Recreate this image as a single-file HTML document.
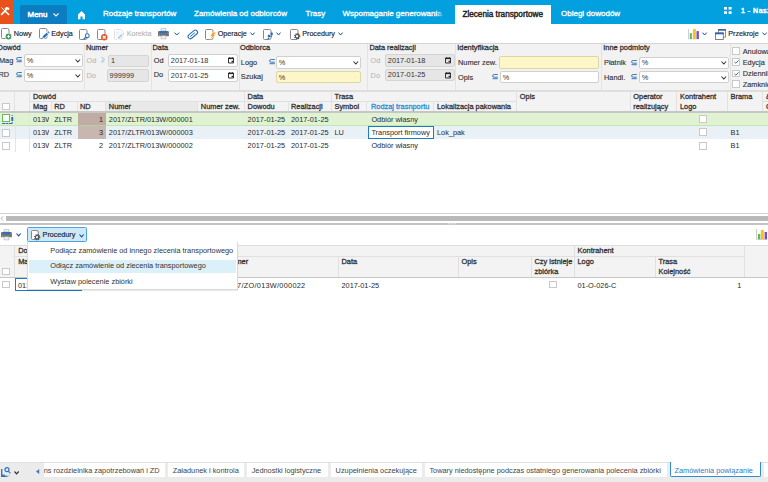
<!DOCTYPE html>
<html><head><meta charset="utf-8">
<style>
*{box-sizing:border-box}
html,body{margin:0;padding:0}
body{width:768px;height:482px;position:relative;overflow:hidden;background:#fff;font-family:"Liberation Sans",sans-serif;font-size:7.35px;color:#2a2a2a;line-height:1}
.a{position:absolute;white-space:nowrap}
svg{position:absolute;overflow:visible}
.tt{position:absolute;top:10.4px;color:#fff;font-size:8px;font-weight:normal;-webkit-text-stroke:0.3px currentColor;white-space:nowrap}
.tb{position:absolute;top:30.4px;font-size:7.2px;color:#222;white-space:nowrap;-webkit-text-stroke:0.15px currentColor}
.inp{position:absolute;background:#fff;border:1px solid #d0d0d0;border-radius:2px;height:12px}
.inp span{position:absolute;left:4px;top:2.5px;color:#333}
.y{background:#fdf6c6;border-color:#ddd7a8}
.dis{background:#e6e6e6;border-color:#d4d4d4}
.sep{position:absolute;top:44px;width:1px;height:46px;background:#e3e3e3}
.lb{position:absolute;color:#303030;white-space:nowrap;-webkit-text-stroke:0.12px currentColor}
.gl{color:#b9b9b9}
.it{color:#333}
.ss{position:absolute;color:#2b7bbd;font-size:8px;font-weight:bold}
.hd{position:absolute;font-weight:normal;-webkit-text-stroke:0.3px currentColor;color:#333;font-size:7.4px;white-space:nowrap}
.vl{position:absolute;width:1px;background:#e0e0e0}
.cb{position:absolute;width:8px;height:8px;border:1px solid #c9c9c9;background:#fff}
.cell{position:absolute;white-space:nowrap;color:#2a2a2a}
</style></head>
<body>
<!-- TOP BAR -->
<div class="a" style="left:0;top:0;width:768px;height:24px;background:#03a0df"></div>
<div class="a" style="left:0;top:0;width:12.5px;height:24px;background:#e9511c"></div>
<svg style="left:0;top:0" width="13" height="24" viewBox="0 0 13 24"><path d="M1.3 7.4 L4.6 10.6" stroke="#fff" stroke-width="1" fill="none"/><path d="M5.4 11.4 L8.7 14.5" stroke="#fff" stroke-width="1.5" stroke-linecap="round" fill="none"/><path d="M1.6 14.4 L6.2 9.7" stroke="#fff" stroke-width="1.7" stroke-linecap="round" fill="none"/><path d="M4.4 8.6 L6.2 6.9 L8.3 7.3 L9.6 9.1 L8.6 10 L6.8 9.4 L5.7 10.3 Z" fill="#fff"/></svg>
<div class="a" style="left:19.5px;top:4.7px;width:47.5px;height:19.3px;background:#0b7dc0;border-radius:2px 2px 0 0"></div>
<div class="tt" style="left:27.6px;top:10.6px;font-size:7.9px;-webkit-text-stroke:0.5px #fff">Menu</div>
<svg style="left:53px;top:13px" width="6" height="4" viewBox="0 0 6 4"><path d="M0.5 0.5 L3 3 L5.5 0.5" stroke="#fff" stroke-width="1.1" fill="none"/></svg>
<svg style="left:78px;top:10.7px" width="7" height="8.3" viewBox="0 0 7 8.3"><path d="M3.5 0 L7 3.6 L7 8.3 L4.6 8.3 L4.6 5.6 L2.4 5.6 L2.4 8.3 L0 8.3 L0 3.6 Z" fill="#fff"/></svg>
<div class="tt" style="left:103px;">Rodzaje transportów</div>
<div class="tt" style="left:194px;">Zamówienia od odbiorców</div>
<div class="tt" style="left:305.6px;">Trasy</div>
<div class="tt" style="left:342.5px;">Wspomaganie generowania</div>
<div class="a" style="left:435.5px;top:8px;width:6px;height:12px;background:linear-gradient(to right,rgba(3,160,223,0),rgba(3,160,223,0.75))"></div>
<div class="a" style="left:455px;top:5px;width:96px;height:19px;background:#fff"></div>
<div class="tt" style="left:462.4px;top:10.8px;color:#222;font-size:8.2px;-webkit-text-stroke:0.4px #222">Zlecenia transportowe</div>
<div class="tt" style="left:561px;">Obiegi dowodów</div>
<svg style="left:724px;top:7px" width="8" height="7" viewBox="0 0 8 7"><rect x="0" y="0" width="3" height="2.6" fill="#fff"/><rect x="4.6" y="0" width="3" height="2.6" fill="#fff"/><rect x="0" y="4.3" width="3" height="2.6" fill="#fff"/><rect x="4.6" y="4.3" width="3" height="2.6" fill="#fff"/></svg>
<div class="tt" style="left:741px;top:7.3px;font-size:7px;letter-spacing:0.5px;-webkit-text-stroke:0.5px #fff">1 - Nasza</div>

<!-- TOOLBAR -->
<div class="a" style="left:0;top:42.5px;width:768px;height:1px;background:#d4d4d4"></div>
<!-- doc icons -->
<svg style="left:1px;top:28px" width="9" height="11" viewBox="0 0 9 11"><path d="M1.5 0.5 H6.5 Q8 0.5 8 2 V9 Q8 10.5 6.5 10.5 H1.5 Q0.5 10.5 0.5 9.5 V1.5 Q0.5 0.5 1.5 0.5 Z" fill="#fff" stroke="#7a7a7a" stroke-width="0.9"/></svg>
<svg style="left:5px;top:33.3px" width="7" height="7" viewBox="0 0 7 7"><circle cx="3.5" cy="3.5" r="3.4" fill="#fff"/><circle cx="3.5" cy="3.5" r="2.9" fill="#3d9f5c"/><path d="M3.5 2 V5 M2 3.5 H5" stroke="#fff" stroke-width="0.95"/></svg>
<div class="tb" style="left:13.7px">Nowy</div>
<svg style="left:39px;top:28.3px" width="9" height="11" viewBox="0 0 9 11"><path d="M1.5 0.5 H6.5 Q8 0.5 8 2 V9 Q8 10.5 6.5 10.5 H1.5 Q0.5 10.5 0.5 9.5 V1.5 Q0.5 0.5 1.5 0.5 Z" fill="#fff" stroke="#7a7a7a" stroke-width="0.9"/></svg>
<svg style="left:39px;top:28px" width="12" height="12" viewBox="0 0 12 12"><path d="M3.2 10.4 L10.2 3.8" stroke="#fff" stroke-width="3.4"/><path d="M4.3 9.4 L8.4 5.5" stroke="#1f6fc0" stroke-width="2.2"/><path d="M8.9 5 L10.1 3.9" stroke="#5a9ad8" stroke-width="2.2"/><path d="M2.6 11 L4.1 9.6" stroke="#6aa6dc" stroke-width="1.3"/></svg>
<div class="tb" style="left:51.3px">Edycja</div>
<svg style="left:79.3px;top:28.5px" width="9" height="11" viewBox="0 0 9 11"><path d="M1.5 0.5 H6.5 Q8 0.5 8 2 V9 Q8 10.5 6.5 10.5 H1.5 Q0.5 10.5 0.5 9.5 V1.5 Q0.5 0.5 1.5 0.5 Z" fill="#fff" stroke="#7a7a7a" stroke-width="0.9"/></svg>
<svg style="left:83px;top:33px" width="7" height="7" viewBox="0 0 7 7"><circle cx="4.3" cy="2.7" r="1.9" fill="#fff" stroke="#2a73c0" stroke-width="1.1"/><path d="M3 4 L0.8 6.2" stroke="#2a73c0" stroke-width="1.3"/></svg>
<svg style="left:96.5px;top:28.5px" width="9" height="11" viewBox="0 0 9 11"><path d="M1.5 0.5 H6.5 Q8 0.5 8 2 V9 Q8 10.5 6.5 10.5 H1.5 Q0.5 10.5 0.5 9.5 V1.5 Q0.5 0.5 1.5 0.5 Z" fill="#fff" stroke="#7a7a7a" stroke-width="0.9"/></svg>
<svg style="left:101px;top:33.5px" width="6.5" height="6.5" viewBox="0 0 6 6"><circle cx="3" cy="3" r="3" fill="#e4552a"/><path d="M1.7 1.7 L4.3 4.3 M4.3 1.7 L1.7 4.3" stroke="#fff" stroke-width="1.1"/></svg>
<svg style="left:114px;top:28.5px" width="12" height="12" viewBox="0 0 12 12"><path d="M1.5 0.5 H6.5 Q8 0.5 8 2 V9 Q8 10.5 6.5 10.5 H1.5 Q0.5 10.5 0.5 9.5 V1.5 Q0.5 0.5 1.5 0.5 Z" fill="#fff" stroke="#dcdcdc" stroke-width="0.9"/><path d="M2 3.2 H5.5 M2 5.2 H4.5" stroke="#cfe0ee" stroke-width="0.8"/><path d="M3 10.6 L10 4" stroke="#fff" stroke-width="3.2"/><path d="M4 9.6 L8.3 5.6" stroke="#b3cfea" stroke-width="2"/><path d="M8.8 5.1 L9.9 4.1" stroke="#c8ddf0" stroke-width="2"/></svg>
<div class="tb" style="left:126.7px;color:#b8b8b8">Korekta</div>
<svg style="left:158px;top:28.3px" width="11" height="11.2" viewBox="0 0 11 11.2"><rect x="3.1" y="0.3" width="4.7" height="2.8" fill="#f2f2f2" stroke="#b8b8b8" stroke-width="0.6"/><path d="M1 2.9 H9.9 Q10.9 2.9 10.9 3.9 V8.2 H0 V3.9 Q0 2.9 1 2.9 Z" fill="#747474"/><rect x="2" y="2.9" width="7" height="2.3" fill="#2f6fc0"/><rect x="3.1" y="7.8" width="4.8" height="3.1" fill="#fff" stroke="#a8a8a8" stroke-width="0.6"/><path d="M3.8 9.1 H7.2" stroke="#bcd3ea" stroke-width="0.6"/><circle cx="1.3" cy="7" r="0.45" fill="#fff"/></svg>
<svg style="left:173.8px;top:31.9px" width="6" height="4" viewBox="0 0 6 4"><path d="M0.5 0.6 L2.8 3 L5.1 0.6" stroke="#1d4f8a" stroke-width="1" fill="none"/></svg>
<svg style="left:186.5px;top:28.5px" width="11.5" height="11" viewBox="0 0 11.5 11"><g transform="rotate(-40 5.75 5.5)"><rect x="0.3" y="3.3" width="11" height="4.4" rx="2.2" fill="none" stroke="#2a6fc0" stroke-width="1.1"/><path d="M2.4 5.5 H8.6" stroke="#2a6fc0" stroke-width="0.9"/></g></svg>
<svg style="left:205.4px;top:28.5px" width="9" height="11" viewBox="0 0 9 11"><path d="M1.5 0.5 H6.5 Q8 0.5 8 2 V9 Q8 10.5 6.5 10.5 H1.5 Q0.5 10.5 0.5 9.5 V1.5 Q0.5 0.5 1.5 0.5 Z" fill="#fff" stroke="#7a7a7a" stroke-width="0.9"/></svg>
<svg style="left:208.8px;top:32.2px" width="7.5" height="7.5" viewBox="0 0 7.5 7.5"><path d="M3.9 0.2 L7.3 0.2 L5.1 2.8 L6.9 2.8 L0.8 7.4 L2.7 4.1 L1.1 4.1 Z" fill="#f0a01e" stroke="#fff" stroke-width="0.5"/></svg>
<div class="tb" style="left:217.7px">Operacje</div>
<svg style="left:249.7px;top:32.0px" width="6" height="4" viewBox="0 0 6 4"><path d="M0.5 0.6 L2.5 3 L4.5 0.6" stroke="#1d4f8a" stroke-width="1" fill="none"/></svg>
<svg style="left:263.2px;top:28.7px" width="9" height="11" viewBox="0 0 9 11"><path d="M1.5 0.5 H6.5 Q8 0.5 8 2 V9 Q8 10.5 6.5 10.5 H1.5 Q0.5 10.5 0.5 9.5 V1.5 Q0.5 0.5 1.5 0.5 Z" fill="#fff" stroke="#7a7a7a" stroke-width="0.9"/></svg>
<svg style="left:266.8px;top:31.8px" width="6.5" height="7.5" viewBox="0 0 6.5 7.5"><ellipse cx="4.7" cy="1.9" rx="1.2" ry="1.6" fill="#2a6fc0"/><ellipse cx="4.2" cy="4.4" rx="0.9" ry="0.7" fill="#2a6fc0"/><ellipse cx="1.9" cy="3.9" rx="1.2" ry="1.5" fill="#2a6fc0"/><ellipse cx="1.5" cy="6.4" rx="0.9" ry="0.7" fill="#2a6fc0"/></svg>
<svg style="left:276px;top:32.0px" width="6" height="4" viewBox="0 0 6 4"><path d="M0.5 0.6 L2.5 3 L4.5 0.6" stroke="#1d4f8a" stroke-width="1" fill="none"/></svg>
<svg style="left:289.5px;top:28.6px" width="9" height="11" viewBox="0 0 9 11"><path d="M1.5 0.5 H6.5 Q8 0.5 8 2 V9 Q8 10.5 6.5 10.5 H1.5 Q0.5 10.5 0.5 9.5 V1.5 Q0.5 0.5 1.5 0.5 Z" fill="#fff" stroke="#7a7a7a" stroke-width="0.9"/></svg>
<svg style="left:293.6px;top:33.4px" width="6.4" height="6.4" viewBox="0 0 6.4 6.4"><circle cx="3.2" cy="3.2" r="2.5" fill="none" stroke="#4a4a4a" stroke-width="1.3" stroke-dasharray="1.1 0.86"/><circle cx="3.2" cy="3.2" r="1.75" fill="none" stroke="#4a4a4a" stroke-width="1.1"/><circle cx="3.2" cy="3.2" r="0.9" fill="#fff"/></svg>
<div class="tb" style="left:302.2px">Procedury</div>
<svg style="left:338.4px;top:32.0px" width="6" height="4" viewBox="0 0 6 4"><path d="M0.5 0.6 L2.5 3 L4.5 0.6" stroke="#1d4f8a" stroke-width="1" fill="none"/></svg>
<svg style="left:688.2px;top:28.9px" width="11.5" height="10.5" viewBox="0 0 11.5 10.5"><path d="M0.5 0 V10" stroke="#c8c8c8" stroke-width="0.9"/><path d="M0.5 10 H11" stroke="#c8c8c8" stroke-width="0.6"/><rect x="1.8" y="4.2" width="2.1" height="5.8" fill="#5cb85c"/><rect x="4.9" y="0.1" width="2.9" height="9.9" fill="#f7c01a"/><rect x="8.5" y="2.1" width="2.4" height="7.9" fill="#7b4fc4"/></svg>
<svg style="left:702.2px;top:32.1px" width="6" height="4" viewBox="0 0 6 4"><path d="M0.5 0.6 L2.6 3 L4.7 0.6" stroke="#1d4f8a" stroke-width="1" fill="none"/></svg>
<svg style="left:715px;top:28.5px" width="11" height="11" viewBox="0 0 11 11"><rect x="3.5" y="0.5" width="7" height="7.6" fill="#fff" stroke="#777" stroke-width="0.8"/><rect x="3.2" y="0.1" width="7.6" height="1.6" fill="#2a63ad"/><rect x="0.5" y="3.9" width="7.8" height="6.6" fill="#fff" stroke="#777" stroke-width="0.9"/><rect x="0.1" y="3.6" width="8.5" height="1.7" fill="#2a63ad"/></svg>
<div class="tb" style="left:728.3px">Przekroje</div>
<svg style="left:762px;top:32.1px" width="6" height="4" viewBox="0 0 6 4"><path d="M0.5 0.6 L2.6 3 L4.7 0.6" stroke="#1d4f8a" stroke-width="1" fill="none"/></svg>

<!-- FILTER PANEL -->
<div class="a" style="left:0;top:43.5px;width:768px;height:46.5px;background:#f2f2f2"></div>
<div class="sep" style="left:84px"></div>
<div class="sep" style="left:151px"></div>
<div class="sep" style="left:239px"></div>
<div class="sep" style="left:367px"></div>
<div class="sep" style="left:455px"></div>
<div class="sep" style="left:601px"></div>
<div class="sep" style="left:730px"></div>
<div class="hd" style="left:-2.4px;top:44.2px">Dowód</div>
<div class="lb a" style="left:-1px;top:56.8px">Mag</div>
<svg style="left:16.3px;top:57px" width="6" height="5.5" viewBox="0 0 6 5.5"><path d="M5.8 0.5 H2.3 Q0.5 0.5 0.5 1.85 Q0.5 3.2 2.3 3.2 H5.8 M0.5 4.7 H5.8" stroke="#3273b0" stroke-width="0.95" fill="none"/></svg>
<div class="inp " style="left:24px;top:54px;width:59px;height:13px"></div><div class="a it" style="left:26.8px;top:56.7px">%</div><svg style="left:75.2px;top:58.7px" width="6" height="4" viewBox="0 0 6 4"><path d="M0.5 0.5 L2.8 3 L5.1 0.5" stroke="#333" stroke-width="1.1" fill="none"/></svg>
<div class="lb a" style="left:-1.5px;top:71.3px">RD</div>
<svg style="left:16.3px;top:72px" width="6" height="5.5" viewBox="0 0 6 5.5"><path d="M5.8 0.5 H2.3 Q0.5 0.5 0.5 1.85 Q0.5 3.2 2.3 3.2 H5.8 M0.5 4.7 H5.8" stroke="#3273b0" stroke-width="0.95" fill="none"/></svg>
<div class="inp " style="left:24px;top:69px;width:59px;height:12.5px"></div><div class="a it" style="left:26.8px;top:71.7px">%</div><svg style="left:75.2px;top:73.7px" width="6" height="4" viewBox="0 0 6 4"><path d="M0.5 0.5 L2.8 3 L5.1 0.5" stroke="#333" stroke-width="1.1" fill="none"/></svg>
<div class="hd" style="left:85.9px;top:44.2px">Numer</div>
<div class="lb gl a" style="left:86.5px;top:57px">Od</div>
<svg style="left:101.4px;top:57.3px" width="4" height="6" viewBox="0 0 4 6"><path d="M0.4 0.4 Q2.5 1.2 3.5 2.2 Q2.5 3.2 0.4 4 M0.4 5.5 Q2.5 4.8 3.5 4.2" stroke="#88b9dc" stroke-width="0.8" fill="none"/></svg>
<div class="inp dis" style="left:108px;top:54.5px;width:41px;height:12.5px"></div><div class="a it" style="left:111px;top:57.2px">1</div>
<div class="lb gl a" style="left:86.5px;top:72px">Do</div>
<div class="inp dis" style="left:107.3px;top:69px;width:41.7px;height:12.5px"></div><div class="a it" style="left:109.6px;top:71.7px">999999</div>
<div class="hd" style="left:152.5px;top:44.2px">Data</div>
<div class="lb a" style="left:153.7px;top:56.7px">Od</div>
<div class="inp " style="left:168px;top:54.3px;width:70px;height:12.299999999999997px"></div><div class="a it" style="left:170.8px;top:57.0px">2017-01-18</div><svg style="left:228.1px;top:57.199999999999996px" width="6" height="6.5" viewBox="0 0 6 6.5"><path d="M0.5 1.3 H5.5 V6 H0.5 Z" fill="none" stroke="#222" stroke-width="0.9"/><rect x="0.1" y="0.8" width="5.8" height="1.3" fill="#222"/><rect x="1.3" y="0.1" width="0.9" height="0.9" fill="#222"/><rect x="3.8" y="0.1" width="0.9" height="0.9" fill="#222"/><rect x="3.6" y="3.8" width="1.5" height="1.4" fill="#222"/></svg>
<div class="lb a" style="left:153.7px;top:71.3px">Do</div>
<div class="inp " style="left:168px;top:69px;width:70px;height:12.5px"></div><div class="a it" style="left:170.8px;top:71.7px">2017-01-25</div><svg style="left:228.1px;top:71.9px" width="6" height="6.5" viewBox="0 0 6 6.5"><path d="M0.5 1.3 H5.5 V6 H0.5 Z" fill="none" stroke="#222" stroke-width="0.9"/><rect x="0.1" y="0.8" width="5.8" height="1.3" fill="#222"/><rect x="1.3" y="0.1" width="0.9" height="0.9" fill="#222"/><rect x="3.8" y="0.1" width="0.9" height="0.9" fill="#222"/><rect x="3.6" y="3.8" width="1.5" height="1.4" fill="#222"/></svg>
<div class="hd" style="left:240px;top:44.2px">Odbiorca</div>
<div class="lb a" style="left:240.8px;top:58.6px">Logo</div>
<svg style="left:268.7px;top:59px" width="6" height="5.5" viewBox="0 0 6 5.5"><path d="M5.8 0.5 H2.3 Q0.5 0.5 0.5 1.85 Q0.5 3.2 2.3 3.2 H5.8 M0.5 4.7 H5.8" stroke="#3273b0" stroke-width="0.95" fill="none"/></svg>
<div class="inp " style="left:276px;top:56.3px;width:85px;height:12.5px"></div><div class="a it" style="left:278.8px;top:59.0px">%</div><svg style="left:353.2px;top:61.0px" width="6" height="4" viewBox="0 0 6 4"><path d="M0.5 0.5 L2.8 3 L5.1 0.5" stroke="#333" stroke-width="1.1" fill="none"/></svg>
<div class="lb a" style="left:240.8px;top:73.2px">Szukaj</div>
<div class="inp y" style="left:276px;top:70.8px;width:85px;height:12.400000000000006px"></div><div class="a it" style="left:278.8px;top:73.5px">%</div>
<div class="hd" style="left:369.4px;top:44.2px">Data realizacji</div>
<div class="lb gl a" style="left:370.6px;top:57px">Od</div>
<div class="inp dis" style="left:385px;top:54.3px;width:69.5px;height:12.5px"></div><div class="a it" style="left:387.8px;top:57.0px">2017-01-18</div><svg style="left:444.6px;top:57.199999999999996px" width="6" height="6.5" viewBox="0 0 6 6.5"><path d="M0.5 1.3 H5.5 V6 H0.5 Z" fill="none" stroke="#222" stroke-width="0.9"/><rect x="0.1" y="0.8" width="5.8" height="1.3" fill="#222"/><rect x="1.3" y="0.1" width="0.9" height="0.9" fill="#222"/><rect x="3.8" y="0.1" width="0.9" height="0.9" fill="#222"/><rect x="3.6" y="3.8" width="1.5" height="1.4" fill="#222"/></svg>
<div class="lb gl a" style="left:370.6px;top:71.5px">Do</div>
<div class="inp dis" style="left:385px;top:68.7px;width:69.5px;height:12.5px"></div><div class="a it" style="left:387.8px;top:71.4px">2017-01-25</div><svg style="left:444.6px;top:71.60000000000001px" width="6" height="6.5" viewBox="0 0 6 6.5"><path d="M0.5 1.3 H5.5 V6 H0.5 Z" fill="none" stroke="#222" stroke-width="0.9"/><rect x="0.1" y="0.8" width="5.8" height="1.3" fill="#222"/><rect x="1.3" y="0.1" width="0.9" height="0.9" fill="#222"/><rect x="3.8" y="0.1" width="0.9" height="0.9" fill="#222"/><rect x="3.6" y="3.8" width="1.5" height="1.4" fill="#222"/></svg>
<div class="hd" style="left:457.3px;top:44.2px">Identyfikacja</div>
<div class="lb a" style="left:458px;top:59px">Numer zew.</div>
<div class="inp y" style="left:499px;top:56.4px;width:100px;height:12.399999999999999px"></div>
<div class="lb a" style="left:458px;top:73.5px">Opis</div>
<svg style="left:491.7px;top:74px" width="6" height="5.5" viewBox="0 0 6 5.5"><path d="M5.8 0.5 H2.3 Q0.5 0.5 0.5 1.85 Q0.5 3.2 2.3 3.2 H5.8 M0.5 4.7 H5.8" stroke="#3273b0" stroke-width="0.95" fill="none"/></svg>
<div class="inp " style="left:500px;top:71px;width:99px;height:11.799999999999997px"></div><div class="a it" style="left:502.8px;top:73.7px">%</div>
<div class="hd" style="left:603.3px;top:44.2px">Inne podmioty</div>
<div class="lb a" style="left:604px;top:59px">Płatnik</div>
<svg style="left:630.6px;top:59.5px" width="6" height="5.5" viewBox="0 0 6 5.5"><path d="M5.8 0.5 H2.3 Q0.5 0.5 0.5 1.85 Q0.5 3.2 2.3 3.2 H5.8 M0.5 4.7 H5.8" stroke="#3273b0" stroke-width="0.95" fill="none"/></svg>
<div class="inp " style="left:639px;top:56.7px;width:90px;height:12.099999999999994px"></div><div class="a it" style="left:641.8px;top:59.400000000000006px">%</div><svg style="left:721.2px;top:61.400000000000006px" width="6" height="4" viewBox="0 0 6 4"><path d="M0.5 0.5 L2.8 3 L5.1 0.5" stroke="#333" stroke-width="1.1" fill="none"/></svg>
<div class="lb a" style="left:604px;top:73.5px">Handl.</div>
<svg style="left:630.6px;top:74px" width="6" height="5.5" viewBox="0 0 6 5.5"><path d="M5.8 0.5 H2.3 Q0.5 0.5 0.5 1.85 Q0.5 3.2 2.3 3.2 H5.8 M0.5 4.7 H5.8" stroke="#3273b0" stroke-width="0.95" fill="none"/></svg>
<div class="inp " style="left:639px;top:71.3px;width:90px;height:12.0px"></div><div class="a it" style="left:641.8px;top:74.0px">%</div><svg style="left:721.2px;top:76.0px" width="6" height="4" viewBox="0 0 6 4"><path d="M0.5 0.5 L2.8 3 L5.1 0.5" stroke="#333" stroke-width="1.1" fill="none"/></svg>
<div class="cb" style="left:732px;top:47.2px;width:7.6px;height:7.6px"></div>
<div class="lb a" style="left:742.7px;top:47.6px">Anulowane</div>
<div class="cb" style="left:732px;top:58.4px;width:7.6px;height:7.6px"></div><svg style="left:733.5px;top:60.4px" width="5" height="4" viewBox="0 0 5 4"><path d="M0.4 1.9 L1.8 3.2 L4.6 0.4" stroke="#2b6cb0" stroke-width="1" fill="none"/></svg>
<div class="lb a" style="left:742.7px;top:58.6px">Edycja</div>
<div class="cb" style="left:732px;top:69.6px;width:7.6px;height:7.6px"></div><svg style="left:733.5px;top:71.6px" width="5" height="4" viewBox="0 0 5 4"><path d="M0.4 1.9 L1.8 3.2 L4.6 0.4" stroke="#2b6cb0" stroke-width="1" fill="none"/></svg>
<div class="lb a" style="left:742.7px;top:69.6px">Dziennik</div>
<div class="cb" style="left:732px;top:80.3px;width:7.6px;height:7.6px"></div>
<div class="lb a" style="left:742.7px;top:80.6px">Zamknięte</div>

<!-- GRID -->
<div class="a" style="left:0px;top:90px;width:768px;height:1.6px;background:#dedede"></div>
<div class="a" style="left:0;top:91.6px;width:768px;height:19.4px;background:#f3f3f3"></div>
<div class="a" style="left:105px;top:101.5px;width:92.5px;height:9.5px;background:#e9e9e9"></div>
<div class="a" style="left:0px;top:111px;width:768px;height:1.8px;background:#c6c6c6"></div>
<div class="a" style="left:29px;top:101px;width:487px;height:1px;background:#e0e0e0"></div>
<div class="a" style="left:762px;top:101px;width:6px;height:1px;background:#e0e0e0"></div>
<div class="a" style="left:14px;top:91.6px;width:1px;height:19.400000000000006px;background:#e2e2e2"></div>
<div class="a" style="left:29px;top:91.6px;width:1px;height:19.400000000000006px;background:#e2e2e2"></div>
<div class="a" style="left:51px;top:101px;width:1px;height:10px;background:#e2e2e2"></div>
<div class="a" style="left:77px;top:101px;width:1px;height:10px;background:#e2e2e2"></div>
<div class="a" style="left:105px;top:101px;width:1px;height:10px;background:#e2e2e2"></div>
<div class="a" style="left:197px;top:101px;width:1px;height:10px;background:#e2e2e2"></div>
<div class="a" style="left:244px;top:91.6px;width:1px;height:19.400000000000006px;background:#e2e2e2"></div>
<div class="a" style="left:288px;top:101px;width:1px;height:10px;background:#e2e2e2"></div>
<div class="a" style="left:331px;top:91.6px;width:1px;height:19.400000000000006px;background:#e2e2e2"></div>
<div class="a" style="left:366px;top:101px;width:1px;height:10px;background:#e2e2e2"></div>
<div class="a" style="left:433px;top:101px;width:1px;height:10px;background:#e2e2e2"></div>
<div class="a" style="left:516px;top:91.6px;width:1px;height:19.400000000000006px;background:#e2e2e2"></div>
<div class="a" style="left:630px;top:91.6px;width:1px;height:19.400000000000006px;background:#e2e2e2"></div>
<div class="a" style="left:676px;top:91.6px;width:1px;height:19.400000000000006px;background:#e2e2e2"></div>
<div class="a" style="left:727px;top:91.6px;width:1px;height:19.400000000000006px;background:#e2e2e2"></div>
<div class="a" style="left:762px;top:91.6px;width:1px;height:19.400000000000006px;background:#e2e2e2"></div>
<div class="hd" style="left:33px;top:93.3px">Dowód</div>
<div class="hd" style="left:247.6px;top:93.3px">Data</div>
<div class="hd" style="left:334.5px;top:93.3px">Trasa</div>
<div class="hd" style="left:519.8px;top:93.3px">Opis</div>
<div class="hd" style="left:633.3px;top:93.3px">Operator</div>
<div class="hd" style="left:680px;top:93.3px">Kontrahent</div>
<div class="hd" style="left:730.6px;top:93.3px">Brama</div>
<div class="hd" style="left:766px;top:93.3px">&amp;</div>
<div class="hd" style="left:633.3px;top:103px">realizujący</div>
<div class="hd" style="left:680px;top:103px">Logo</div>
<div class="hd" style="left:766px;top:103px">C</div>
<div class="hd" style="left:33px;top:103px">Mag</div>
<div class="hd" style="left:54.2px;top:103px">RD</div>
<div class="hd" style="left:80px;top:103px">ND</div>
<div class="hd" style="left:108.8px;top:103px">Numer</div>
<div class="hd" style="left:200.8px;top:103px">Numer zew.</div>
<div class="hd" style="left:247.6px;top:103px">Dowodu</div>
<div class="hd" style="left:291px;top:103px">Realizacji</div>
<div class="hd" style="left:334.5px;top:103px">Symbol</div>
<div class="hd" style="left:437px;top:103px">Lokalizacja pakowania</div>
<div class="hd" style="left:371px;top:103px;color:#2a8fd4">Rodzaj trasnportu</div>
<div class="cb" style="left:2.2px;top:102.7px;width:7.7px;height:7.6px"></div>
<div class="a" style="left:0px;top:112.8px;width:768px;height:12px;background:#dff3d3"></div>
<div class="a" style="left:0px;top:124.8px;width:768px;height:0.9px;background:#c4e5ae"></div>
<div class="a" style="left:0px;top:125.7px;width:768px;height:13px;background:#e9f1f6"></div>
<div class="a" style="left:77.7px;top:112.9px;width:28.2px;height:11.9px;background:#c0aca4"></div>
<div class="a" style="left:77.7px;top:125.8px;width:28.2px;height:12.9px;background:#c8b6b0"></div>
<div class="a" style="left:77.7px;top:124.8px;width:28.200000000000003px;height:0.9px;background:#b5cfa0"></div>
<div class="a" style="left:14.6px;top:112.8px;width:1px;height:39.2px;background:#d9e7f3"></div>
<div class="a" style="left:29px;top:112.8px;width:1px;height:39.2px;background:#d9e7f3"></div>
<div class="a" style="left:368px;top:126px;width:66.2px;height:13px;border:1.7px solid #1a7cc6;background:#fff"></div>
<div class="cell" style="left:33px;top:115.6px;width:16.4px;overflow:hidden">013W</div>
<div class="cell" style="left:54.2px;top:115.6px">ZLTR</div>
<div class="cell" style="right:665px;top:115.6px">1</div>
<div class="cell" style="left:108.8px;top:115.6px">2017/ZLTR/013W/000001</div>
<div class="cell" style="left:247.6px;top:115.6px">2017-01-25</div>
<div class="cell" style="left:291px;top:115.6px">2017-01-25</div>
<div class="cell" style="left:371.4px;top:115.6px">Odbiór własny</div>
<div class="cb" style="left:698.6px;top:115.1px;width:8.1px;height:8.1px"></div>
<div class="cb" style="left:2px;top:128.6px;width:8px;height:8px"></div>
<div class="cell" style="left:33px;top:129.0px;width:16.4px;overflow:hidden">013W</div>
<div class="cell" style="left:54.2px;top:129.0px">ZLTR</div>
<div class="cell" style="right:665px;top:129.0px">3</div>
<div class="cell" style="left:108.8px;top:129.0px">2017/ZLTR/013W/000003</div>
<div class="cell" style="left:247.6px;top:129.0px">2017-01-25</div>
<div class="cell" style="left:291px;top:129.0px">2017-01-25</div>
<div class="cell" style="left:334.5px;top:129.0px">LU</div>
<div class="cell" style="left:371.4px;top:129.0px">Transport firmowy</div>
<div class="cell" style="left:437px;top:129.0px">Lok_pak</div>
<div class="cell" style="left:730.6px;top:129.0px">B1</div>
<div class="cb" style="left:698.6px;top:128.29999999999998px;width:8.1px;height:8.1px"></div>
<div class="cb" style="left:2px;top:142.2px;width:8px;height:8px"></div>
<div class="cell" style="left:33px;top:142.3px;width:16.4px;overflow:hidden">013W</div>
<div class="cell" style="left:54.2px;top:142.3px">ZLTR</div>
<div class="cell" style="right:665px;top:142.3px">2</div>
<div class="cell" style="left:108.8px;top:142.3px">2017/ZLTR/013W/000002</div>
<div class="cell" style="left:247.6px;top:142.3px">2017-01-25</div>
<div class="cell" style="left:291px;top:142.3px">2017-01-25</div>
<div class="cell" style="left:371.4px;top:142.3px">Odbiór własny</div>
<div class="cell" style="left:730.6px;top:142.3px">B1</div>
<div class="cb" style="left:698.6px;top:141.89999999999998px;width:8.1px;height:8.1px"></div>
<div class="a" style="left:1.9px;top:114px;width:8.4px;height:7.8px;border:1.3px solid #66bd55;background:#fff"></div>
<div class="a" style="left:2px;top:122.8px;width:10px;height:0;border-top:0.9px dashed #3070c0"></div>
<svg style="left:11.3px;top:114.8px" width="2.5" height="9" viewBox="0 0 2.5 9"><rect x="0.6" y="0" width="1.2" height="1" fill="#3a78c4"/><rect x="0.3" y="2" width="1.9" height="4" fill="#2a6cc0"/><rect x="0.6" y="7" width="1.2" height="1.6" fill="#3a78c4"/></svg>

<!-- SCROLLBAR -->
<div class="a" style="left:0px;top:213px;width:768px;height:1px;background:#d2d2d2"></div>
<div class="a" style="left:6px;top:216px;width:762px;height:4.6px;background:#b9b9b9"></div>
<svg style="left:0;top:216px" width="4" height="5" viewBox="0 0 4 5"><path d="M3.4 0.3 L0.8 2.5 L3.4 4.7" stroke="#9a9a9a" stroke-width="0.7" fill="none"/></svg>
<div class="a" style="left:0px;top:222.8px;width:768px;height:2px;background:#c4c4c4"></div>
<svg style="left:448px;top:223px" width="8" height="1.5" viewBox="0 0 8 1.5"><rect x="0.3" y="0.2" width="1.3" height="1.1" fill="#eee"/><rect x="3.3" y="0.2" width="1.3" height="1.1" fill="#eee"/><rect x="6.3" y="0.2" width="1.3" height="1.1" fill="#eee"/></svg>
<!-- BOTTOM TOOLBAR -->
<svg style="left:1px;top:229px" width="11" height="11.2" viewBox="0 0 11 11.2"><rect x="3.1" y="0.3" width="4.7" height="2.8" fill="#f2f2f2" stroke="#b8b8b8" stroke-width="0.6"/><path d="M1 2.9 H9.9 Q10.9 2.9 10.9 3.9 V8.2 H0 V3.9 Q0 2.9 1 2.9 Z" fill="#747474"/><rect x="2" y="2.9" width="7" height="2.3" fill="#2f6fc0"/><rect x="3.1" y="7.8" width="4.8" height="3.1" fill="#fff" stroke="#a8a8a8" stroke-width="0.6"/><path d="M3.8 9.1 H7.2" stroke="#bcd3ea" stroke-width="0.6"/><circle cx="1.3" cy="7" r="0.45" fill="#fff"/></svg>
<svg style="left:16.3px;top:233.4px" width="6" height="4" viewBox="0 0 6 4"><path d="M0.5 0.5 L2.6 2.9 L4.7 0.5" stroke="#1d4f8a" stroke-width="1.1" fill="none"/></svg>
<div class="a" style="left:26.7px;top:227.3px;width:60.4px;height:14.6px;background:#cde8f7;border:1px solid #4ba3d9;border-bottom-width:1.4px;border-radius:1.5px"></div>
<svg style="left:30.9px;top:229.5px" width="9" height="10" viewBox="0 0 9 10"><path d="M1.5 0.5 H5.8 Q7.2 0.5 7.2 2 V8 Q7.2 9.5 5.8 9.5 H1.5 Q0.5 9.5 0.5 8.5 V1.5 Q0.5 0.5 1.5 0.5 Z" fill="#fff" stroke="#7a7a7a" stroke-width="0.9"/></svg>
<svg style="left:34.3px;top:233.8px" width="6.4" height="6.4" viewBox="0 0 6.4 6.4"><circle cx="3.2" cy="3.2" r="2.5" fill="none" stroke="#4a4a4a" stroke-width="1.3" stroke-dasharray="1.1 0.86"/><circle cx="3.2" cy="3.2" r="1.75" fill="none" stroke="#4a4a4a" stroke-width="1.1"/><circle cx="3.2" cy="3.2" r="0.9" fill="#cde8f7"/></svg>
<div class="tb" style="left:42.6px;top:231.3px">Procedury</div>
<svg style="left:78.5px;top:233.5px" width="6" height="4" viewBox="0 0 6 4"><path d="M0.5 0.5 L2.6 2.9 L4.7 0.5" stroke="#1d4f8a" stroke-width="1.1" fill="none"/></svg>
<svg style="left:756.2px;top:229px" width="11.5" height="10.7" viewBox="0 0 11.5 10.7"><path d="M0.6 0 V10.3" stroke="#c8c8c8" stroke-width="1"/><path d="M0.5 10.3 H11.5" stroke="#aaa" stroke-width="0.6"/><rect x="2" y="5" width="2.3" height="5.3" fill="#5cb85c"/><rect x="4.8" y="1" width="3" height="9.3" fill="#f7c01a"/><rect x="8.6" y="3" width="2.4" height="7.3" fill="#7b4fc4"/></svg>
<!-- BOTTOM GRID -->
<div class="a" style="left:0px;top:245px;width:768px;height:1px;background:#dedede"></div>
<div class="a" style="left:0;top:246px;width:768px;height:30.5px;background:#f3f3f3"></div>
<div class="a" style="left:0px;top:276.5px;width:768px;height:1.3px;background:#c6c6c6"></div>
<div class="a" style="left:15px;top:256px;width:729px;height:1px;background:#e0e0e0"></div>
<div class="a" style="left:14px;top:246px;width:1px;height:30.5px;background:#e0e0e0"></div>
<div class="a" style="left:744px;top:246px;width:1px;height:30.5px;background:#e0e0e0"></div>
<div class="a" style="left:574px;top:246px;width:1px;height:30.5px;background:#e0e0e0"></div>
<div class="a" style="left:338px;top:256.5px;width:1px;height:20.0px;background:#e0e0e0"></div>
<div class="a" style="left:458px;top:256.5px;width:1px;height:20.0px;background:#e0e0e0"></div>
<div class="a" style="left:531px;top:256.5px;width:1px;height:20.0px;background:#e0e0e0"></div>
<div class="a" style="left:655px;top:256.5px;width:1px;height:20.0px;background:#e0e0e0"></div>
<div class="hd" style="left:18.2px;top:247.2px">Dowód</div>
<div class="hd" style="left:18.2px;top:258.3px">Mag</div>
<div class="hd" style="left:226px;top:258.3px">Numer</div>
<div class="hd" style="left:341.5px;top:258.3px">Data</div>
<div class="hd" style="left:461.5px;top:258.3px">Opis</div>
<div class="hd" style="left:534.5px;top:258.3px">Czy istnieje</div>
<div class="hd" style="left:534.5px;top:268.3px">zbiórka</div>
<div class="hd" style="left:577.5px;top:247.2px">Kontrahent</div>
<div class="hd" style="left:577.5px;top:258.3px">Logo</div>
<div class="hd" style="left:658.5px;top:258.3px">Trasa</div>
<div class="hd" style="left:658.5px;top:268.3px">Kolejność</div>
<div class="cb" style="left:2.3px;top:268.3px;width:7.4px;height:7.2px"></div>
<div class="cb" style="left:2.3px;top:281px;width:7.4px;height:7.4px"></div>
<div class="cell" style="left:18px;top:281.5px">013W</div>
<div class="cell" style="left:224px;top:281.5px;letter-spacing:0.27px">2017/ZO/013W/000022</div>
<div class="cell" style="left:341.5px;top:281.5px">2017-01-25</div>
<div class="cb" style="left:549.3px;top:280.6px;width:7.6px;height:7.6px"></div>
<div class="cell" style="left:577.5px;top:281.5px">01-O-026-C</div>
<div class="cell" style="right:26.700000000000045px;top:281.5px">1</div>
<div class="a" style="left:15.3px;top:278.2px;width:67.2px;height:13.1px;border:1.8px solid #1a7cc6"></div>
<!-- DROPDOWN -->
<div class="a" style="left:26.8px;top:241.6px;width:211px;height:48.6px;background:#fff;border:1px solid #d9d9d9;border-top:0;box-shadow:0 1px 1px rgba(0,0,0,0.08)"></div>
<div class="a" style="left:29px;top:259.8px;width:206.5px;height:12.9px;background:#dcf0fa"></div>
<div class="cell" style="left:50.3px;top:247.2px;color:#333">Podłącz zamówienie od innego zlecenia transportowego</div>
<div class="cell" style="left:50.3px;top:262.4px;color:#333">Odłącz zamówienie od zlecenia transportowego</div>
<div class="cell" style="left:50.3px;top:278.1px;color:#333">Wystaw polecenie zbiórki</div>
<!-- TABS -->
<div class="a" style="left:0;top:461.8px;width:768px;height:20.2px;background:#ebebeb;border-top:1px solid #e0e0e0"></div>
<svg style="left:1.3px;top:467px" width="10" height="10" viewBox="0 0 10 10"><path d="M0.7 2 V9.3 H6.5" stroke="#2a73c0" stroke-width="1.3" fill="none"/><rect x="0.2" y="7.6" width="3.6" height="2.2" fill="#2a73c0"/><circle cx="6" cy="2.7" r="2" fill="none" stroke="#2a73c0" stroke-width="1.2"/><path d="M7.3 4.1 L9.4 6.3" stroke="#2a73c0" stroke-width="1.2"/><rect x="5" y="8.3" width="1.2" height="1" fill="#aaa"/><rect x="7.3" y="8.3" width="1.2" height="1" fill="#aaa"/></svg>
<svg style="left:14.3px;top:471px" width="5.5" height="3.5" viewBox="0 0 5.5 3.5"><path d="M0.5 0.5 L2.6 2.8 L4.7 0.5" stroke="#333" stroke-width="1.2" fill="none"/></svg>
<svg style="left:36px;top:469px" width="3.5" height="5" viewBox="0 0 3.5 5"><path d="M3.2 0 L0 2.5 L3.2 5 Z" fill="#3a78b8"/></svg>
<div class="a" style="left:44px;top:462.6px;width:121.19999999999999px;height:14.1px;background:#fff;overflow:hidden"><span style="position:absolute;left:-0.3px;top:4.5px;color:#444">ns rozdzielnika zapotrzebowań i ZD</span></div>
<div class="a" style="left:168.3px;top:462.6px;width:75.39999999999998px;height:14.1px;background:#fff;overflow:hidden"><span style="position:absolute;left:4.4px;top:4.5px;color:#444">Załadunek i kontrola</span></div>
<div class="a" style="left:247.3px;top:462.6px;width:80.80000000000001px;height:14.1px;background:#fff;overflow:hidden"><span style="position:absolute;left:4.4px;top:4.5px;color:#444">Jednostki logistyczne</span></div>
<div class="a" style="left:331.2px;top:462.6px;width:90.80000000000001px;height:14.1px;background:#fff;overflow:hidden"><span style="position:absolute;left:4.4px;top:4.5px;color:#444">Uzupełnienia oczekujące</span></div>
<div class="a" style="left:425px;top:462.6px;width:241.5px;height:14.1px;background:#fff;overflow:hidden"><span style="position:absolute;left:4.4px;top:4.5px;color:#444">Towary niedostępne podczas ostatniego generowania polecenia zbiórki</span></div>
<div class="a" style="left:764px;top:462.6px;width:36px;height:14.1px;background:#fff;overflow:hidden"><span style="position:absolute;left:4px;top:4.5px;color:#444"></span></div>
<div class="a" style="left:670px;top:462.4px;width:91px;height:14.4px;background:#fff;border:1px solid #2f8fd2;border-top:0;border-radius:0 0 2px 2px"></div>
<div class="cell" style="left:674.5px;top:467px;color:#2a80c4">Zamówienia powiązanie</div>
</body></html>
